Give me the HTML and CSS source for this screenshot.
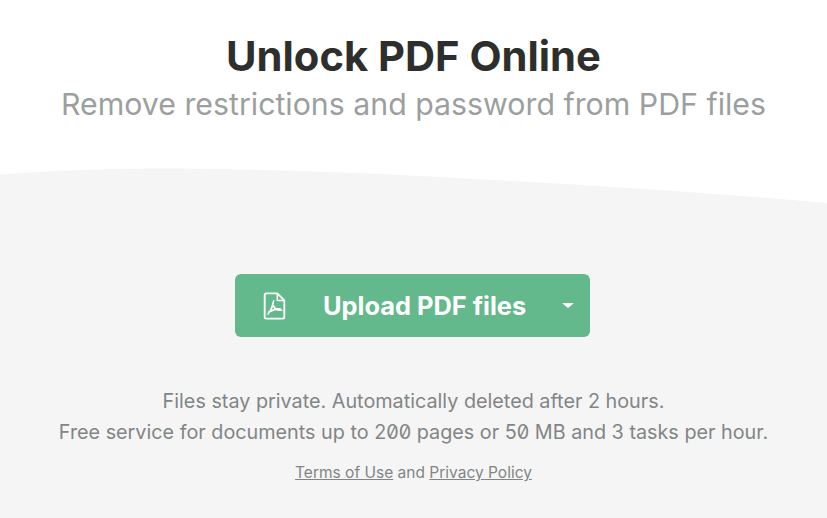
FILE: index.html
```html
<!DOCTYPE html>
<html lang="en">
<head>
    <meta charset="UTF-8">
    <meta name="viewport" content="width=device-width, initial-scale=1.0">
    <title>Unlock PDF Online</title>
    <link rel="stylesheet" href="styles.css">
</head>
<body>
    <header class="hero">
        <h1>Unlock PDF Online</h1>
        <p class="subtitle">Remove restrictions and password from PDF files</p>
    </header>

    <svg class="wave" viewBox="0 0 827 36" preserveAspectRatio="none" aria-hidden="true">
        <path d="M0 6.5C50 3 100 .5 150 .5C230 .5 310 3 400 7C520 13 680 22 827 35V36H0Z" fill="#f5f5f5"/>
    </svg>

    <main class="panel">
        <button class="upload" type="button">
            <svg class="pdf-icon" viewBox="0 0 24 30" aria-hidden="true">
                <path d="M3 1.5H15L22.5 9V27a1.5 1.5 0 0 1-1.5 1.5H3A1.5 1.5 0 0 1 1.5 27V3A1.5 1.5 0 0 1 3 1.5Z" fill="none" stroke="currentColor" stroke-width="2" stroke-linejoin="round"/>
                <path d="M15 1.5V9H22.5" fill="none" stroke="currentColor" stroke-width="1.6"/>
                <path d="M11 9.5C10.5 13 9 19 5 23.5M11 15C12.5 18 15 19.8 19.5 19.5M6 21.5C10 19 14 18 18 18" fill="none" stroke="currentColor" stroke-width="1.8" stroke-linecap="round"/>
            </svg>
            <span class="upload-label">Upload PDF files</span>
            <span class="caret"></span>
        </button>

        <p class="note">Files stay private. Automatically deleted after 2 hours.<br>Free service for documents up to 200 pages or 50 MB and 3 tasks per hour.</p>
        <p class="legal"><a href="#">Terms of Use</a> and <a href="#">Privacy Policy</a></p>
    </main>
</body>
</html>
```

FILE: styles.css
```css
html, body {
    height: 100%;
}
body {
    margin: 0;
    display: flex;
    flex-direction: column;
    overflow: hidden;
    background-color: #fff;
    font-family: Inter, "Noto Sans", sans-serif;
    font-feature-settings: "zero";
    text-align: center;
}
.hero {
    height: 168px;
    padding-top: 29px;
    box-sizing: border-box;
}
h1 {
    margin: 0;
    color: #2e2e2c;
    font-size: 41.7px;
    line-height: 54px;
    font-weight: 700;
}
.subtitle {
    margin: 0;
    color: #9c9f9f;
    font-size: 30.3px;
    line-height: 42px;
}
.wave {
    display: block;
    width: 100%;
    height: 36px;
    flex: none;
}
.panel {
    flex: 1;
    padding-top: 70px;
    background-color: #f5f5f5;
}
.upload {
    display: flex;
    align-items: center;
    width: 355px;
    height: 63px;
    margin: 0 0 0 235px;
    padding: 0;
    border: none;
    border-radius: 6px;
    background-color: #63b98b;
    color: #fff;
    font-family: inherit;
    cursor: pointer;
}
.pdf-icon {
    width: 23px;
    height: 28px;
    margin-left: 28px;
    flex: none;
}
.upload-label {
    margin-left: 37px;
    font-size: 25.4px;
    font-weight: 700;
    white-space: nowrap;
}
.caret {
    margin-left: 36px;
    border-top: 5px solid #fff;
    border-left: 6px solid transparent;
    border-right: 6px solid transparent;
}
.note {
    margin: 49px 0 0;
    color: #828585;
    font-size: 19.8px;
    line-height: 31px;
}
.legal {
    margin: 13px 0 0;
    color: #828585;
    font-size: 15.5px;
    line-height: 24px;
}
.legal a {
    color: inherit;
}
```
